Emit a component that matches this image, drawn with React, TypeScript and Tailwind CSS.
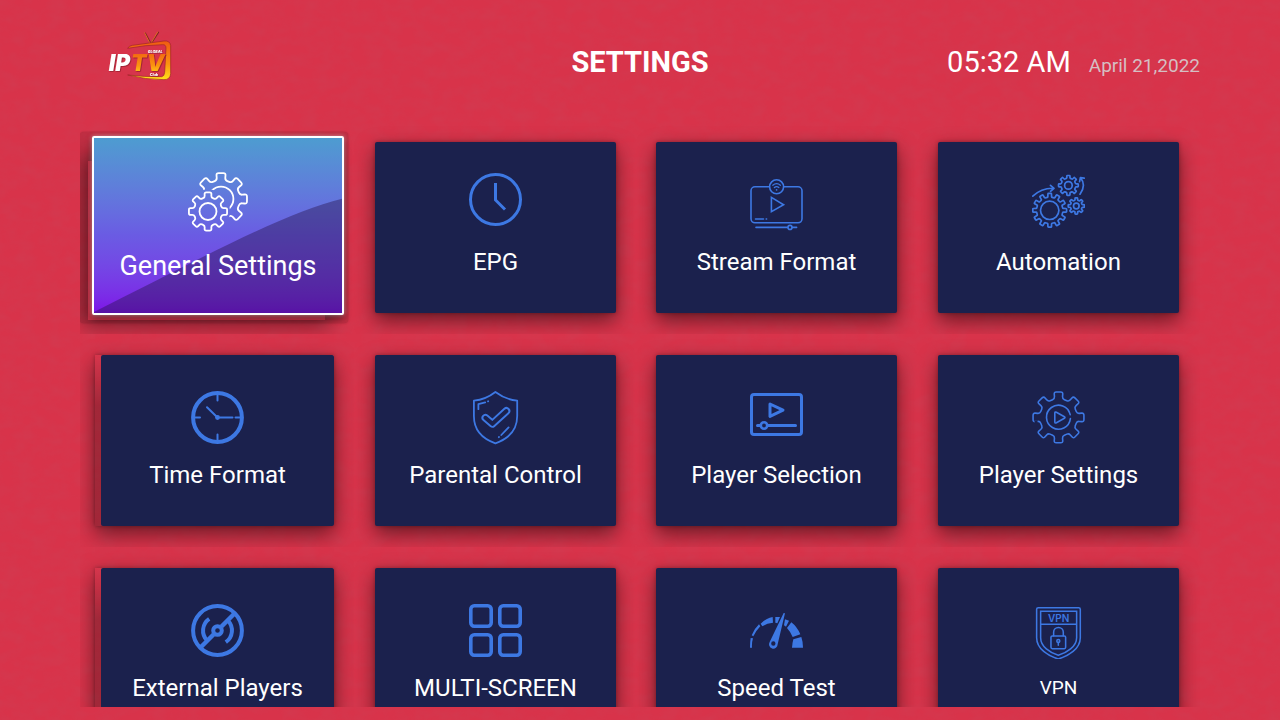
import type { ReactNode } from 'react';

const BLUE = '#3d78e3';
const NAVY = '#1b214d';

/** Outline of a gear with n teeth, the first one pointing up, every corner rounded by `soft`. */
function gear(
  cx: number,
  cy: number,
  outer: number,
  root: number,
  n: number,
  top = 0.2,
  base = 0.27,
  soft = 0.6,
): string {
  const step = (Math.PI * 2) / n;
  const points: [number, number][] = [];
  for (let i = 0; i < n; i++) {
    const a = i * step;
    const corners: [number, number][] = [
      [root, a - base * step],
      [outer, a - top * step],
      [outer, a + top * step],
      [root, a + base * step],
    ];
    for (const [r, t] of corners) points.push([cx + r * Math.sin(t), cy - r * Math.cos(t)]);
  }
  const toward = (p: [number, number], q: [number, number]) => {
    const length = Math.hypot(q[0] - p[0], q[1] - p[1]);
    const k = Math.min(soft, length / 2) / length;
    return `${(p[0] + (q[0] - p[0]) * k).toFixed(2)} ${(p[1] + (q[1] - p[1]) * k).toFixed(2)}`;
  };
  return (
    points
      .map((p, i) => {
        const previous = points[(i + points.length - 1) % points.length];
        const next = points[(i + 1) % points.length];
        return `${i ? 'L' : 'M'}${toward(p, previous)}Q${p[0].toFixed(2)} ${p[1].toFixed(2)} ${toward(p, next)}`;
      })
      .join('') + 'Z'
  );
}

function Icon({ children, width = 2 }: { children: ReactNode; width?: number }) {
  return (
    <svg
      aria-hidden="true"
      viewBox="0 0 53 60"
      className="h-[60px] w-[53px] shrink-0"
      fill="none"
      stroke={BLUE}
      strokeWidth={width}
      strokeLinejoin="round"
      strokeLinecap="round"
    >
      {children}
    </svg>
  );
}

const GeneralIcon = () => (
  <svg
    aria-hidden="true"
    viewBox="0 0 60 60"
    className="h-[60px] w-[60px] shrink-0"
    fill="none"
    stroke="#fff"
    strokeWidth={1.8}
    strokeLinejoin="round"
    strokeLinecap="round"
  >
    <mask id="behind-gear" maskUnits="userSpaceOnUse" x="0" y="0" width="60" height="60">
      <rect width="60" height="60" fill="#fff" stroke="none" />
      <circle cx="20" cy="39.3" r="22" fill="#000" stroke="none" />
      <rect x="30" y="46" width="10" height="14" fill="#000" stroke="none" />
    </mask>
    <g mask="url(#behind-gear)">
      <path d={gear(33, 27, 26.4, 19.3, 8, 0.23, 0.27, 2.4)} />
      <circle cx="33" cy="27" r="12.4" />
    </g>
    <path d={gear(20, 39.5, 19.4, 14.4, 8, 0.23, 0.29, 1.8)} />
    <circle cx="20" cy="39.5" r="8.5" />
  </svg>
);

const EpgIcon = () => (
  <Icon width={3}>
    <circle cx="26.5" cy="26.5" r="25" />
    <path d="M26.5 10V27L36 36.5" strokeLinecap="butt" strokeLinejoin="miter" />
  </Icon>
);

const StreamIcon = () => (
  <Icon width={1.6}>
    <rect x="1" y="13.8" width="51" height="36" rx="4" />
    <circle cx="26.6" cy="13.8" r="7" fill={NAVY} />
    <path d="M22.8 12.2Q26.6 9 30.4 12.2M24.4 14.6Q26.6 12.6 28.8 14.6" strokeWidth={1.3} />
    <circle cx="26.6" cy="16.8" r="0.9" fill={BLUE} stroke="none" />
    <path d="M21.4 24.4L33.6 31.7L21.4 38.7Z" strokeLinejoin="miter" />
    <path d="M5.5 46H13.5M16.2 46H16.6M6 54.4H37.6M42.4 54.4H46.6" />
    <circle cx="40" cy="54.4" r="2" />
  </Icon>
);

const AutomationIcon = () => (
  <Icon width={1.7}>
    <path d={gear(17.7, 37.3, 17, 13.2, 12)} />
    <circle cx="17.7" cy="37.3" r="9.2" />
    <path d={gear(36.4, 12.4, 10, 7.4, 8)} />
    <circle cx="36.4" cy="12.4" r="3.8" />
    <path d={gear(44.3, 33, 8.2, 6, 8)} />
    <circle cx="44.3" cy="33" r="2.8" />
    <path d="M0.8 23.2Q9.5 14.8 22 15.3M18.5 12.4L22 15.3L18.5 18.3" />
    <path d="M48 21.2Q54.5 12.5 48.6 4.8M47.6 8.6L48.4 4.6L52.2 5.2" />
  </Icon>
);

const TimeIcon = () => (
  <Icon width={2}>
    <circle cx="26.5" cy="31.5" r="24.4" strokeWidth={4} />
    <path d="M26.5 9V14.5M26.5 48.5V54M4 31.5H9M44.5 31.5H50M26.5 31.5H41.5M26.5 31.5L16 21.2" />
    <circle cx="26.5" cy="31.5" r="2.4" fill={BLUE} stroke="none" />
  </Icon>
);

const ParentalIcon = () => (
  <Icon width={1.8}>
    <path d="M26.4 6C20 11 12 14 4.9 14.7V30C4.9 45 14 53 26.4 57.3C38.8 53 48.2 45 48.2 30V14.7C41 14 33 11 26.4 6Z" />
    <path d="M16.4 31.8L23.4 37.8L37.4 25" strokeWidth={7.8} />
    <path d="M16.4 31.8L23.4 37.8L37.4 25" stroke={NAVY} strokeWidth={4} />
    <path d="M9.4 23.2V18.2L16.2 16.4M19 15.4L19.2 15.3M32.3 49L39.6 41.4M29.8 51.2L30 51" />
  </Icon>
);

const SelectionIcon = () => (
  <Icon width={3}>
    <rect x="1.5" y="8.5" width="50" height="40" rx="2.5" />
    <path d="M20 18L33 24.2L20 30.4Z" />
    <path d="M7.5 39.5H10M18 39.5H45.5" />
    <circle cx="14" cy="39.5" r="3.2" strokeWidth={2.6} />
  </Icon>
);

const PlayerSettingsIcon = () => (
  <Icon width={1.6}>
    <path d={gear(26.5, 31.4, 25.8, 19, 8, 0.22, 0.26, 2.2)} />
    <path d="M2.6 36.4L5.6 36.2" stroke={NAVY} strokeWidth={3.4} strokeLinecap="butt" />
    <path d="M38.2 28.6A12 12 0 1 0 38.4 32.6M36 23.8L37.2 26" />
    <path d="M22.8 27V36Q22.8 37.6 24.4 36.8L32.4 32.3Q33.6 31.5 32.4 30.7L24.4 26.2Q22.8 25.4 22.8 27Z" />
  </Icon>
);

const ExternalIcon = () => (
  <Icon width={4}>
    <g strokeLinecap="butt">
      <circle cx="26.5" cy="31.5" r="24.4" />
      <path d="M9.5 48.5L22.5 35.5M30.5 27.5L43.5 14.5" strokeWidth={4.4} />
      <circle cx="26.5" cy="31.5" r="4.3" />
      <path d="M18.2 19.8A14.3 14.3 0 0 0 16 41.4M34.8 43.2A14.3 14.3 0 0 0 37 21.6" />
    </g>
  </Icon>
);

const MultiIcon = () => (
  <Icon width={3.6}>
    <rect x="1.8" y="6.8" width="20.4" height="20.4" rx="3.4" />
    <rect x="30.8" y="6.8" width="20.4" height="20.4" rx="3.4" />
    <rect x="1.8" y="35.8" width="20.4" height="20.4" rx="3.4" />
    <rect x="30.8" y="35.8" width="20.4" height="20.4" rx="3.4" />
  </Icon>
);

const SpeedIcon = () => (
  <Icon>
    <g transform="translate(-20 -4) scale(0.3333)" fill={BLUE} stroke="none" fillRule="evenodd">
      <path d="M62 129L69 130Q65 143 66 158H60Q60 142 62 129Z" />
      <path d="M65 121Q73 101 87 88L91 94Q79 106 70 124Z" />
      <path d="M92 86Q107 70 128 66L129 83Q112 84 97 94Z" />
      <path d="M136 66L150 66L142 85L136 83Z" />
      <path d="M165 73L177 77L168 95L162 91Z" />
      <path d="M184 82Q201 95 211 118L188 126Q182 111 171 99Z" />
      <path d="M190 133L214 126Q219 140 219 158H186Q187 144 190 133Z" />
      <path d="M161 54L165 55L143 148A13 13 0 1 1 119 141ZM130 139A6.5 6.5 0 1 0 130 152A6.5 6.5 0 1 0 130 139Z" />
    </g>
  </Icon>
);

const VpnIcon = () => (
  <Icon>
    <g transform="translate(-302 -4) scale(0.3333)" strokeWidth={4.6}>
      <path d="M925 38H1046Q1051 38 1051 43V128C1051 162 1015 183 985 192C955 183 920 162 920 128V43Q920 38 925 38Z" />
      <path d="M932 49H1040V128C1040 155 1010 173 985 181C960 173 932 155 932 128ZM932 88H1040" strokeLinejoin="miter" />
      <rect x="963" y="123" width="44" height="38" rx="4" />
      <path d="M971 122V112A14.5 14.5 0 0 1 1000 112V122M985 142V151" />
      <circle cx="985" cy="138" r="4.5" />
      <text
        x="986"
        y="80"
        textAnchor="middle"
        className="font-['Inter',sans-serif] text-[30px] font-semibold"
        fill={BLUE}
        stroke="none"
      >
        VPN
      </text>
    </g>
  </Icon>
);

function Logo() {
  return (
    <svg role="img" aria-label="IPTV Global Club" viewBox="0 0 70 60" className="h-[60px] w-[70px]">
      <defs>
        <linearGradient id="flame" x1="0" y1="0" x2="0" y2="1">
          <stop offset="0" stopColor="#ef5a12" />
          <stop offset="0.6" stopColor="#fb9410" />
          <stop offset="1" stopColor="#ffe21a" />
        </linearGradient>
      </defs>
      <g transform="translate(-16 -6) scale(0.3333)">
        <path d="M166 43L182 73M205 40L183 74" fill="none" stroke="#7d1f28" strokeWidth="4.5" strokeLinecap="round" />
        <path d="M164 42L180 73M203 39L182 74" fill="none" stroke="#f0801f" strokeWidth="2.4" strokeLinecap="round" />
        <path d="M168 77Q181 66 194 73Z" fill="#b5472a" />
        <path
          d="M113 88Q117 80 127 79L222 66Q240 64 242 80V164Q241 182 222 182Q165 182 113 168Q165 174 215 173Q223 172 224 160L228 88Q228 76 218 77Q165 78 113 88Z"
          fill="url(#flame)"
          stroke="#9d1f2b"
          strokeWidth="2"
        />
        <g className="font-['Inter',sans-serif] font-black italic drop-shadow-[2px_2px_0_#8e1d2c]" stroke="none">
          <text x="56" y="157" className="text-[68px]" fill="#fff">IP</text>
          <text x="123" y="157" className="text-[68px]" fill="url(#flame)">TV</text>
          <text x="173" y="102" className="text-[11px]" fill="#fff">GLOBAL</text>
          <text x="179" y="170" className="text-[11px]" fill="#fff">Club</text>
        </g>
      </g>
    </svg>
  );
}

/** Faint paper grain over the red backdrop. */
function Grain() {
  return (
    <svg aria-hidden="true" className="pointer-events-none absolute inset-0 h-full w-full opacity-10">
      <filter id="grain" x="0" y="0" width="100%" height="100%">
        <feTurbulence type="fractalNoise" baseFrequency="0.06 0.09" numOctaves="5" seed="4" />
        <feColorMatrix values="0 0 0 0 0.4  0 0 0 0 0.15  0 0 0 0 0.2  1.6 0 0 0 -0.5" />
      </filter>
      <rect width="100%" height="100%" filter="url(#grain)" />
    </svg>
  );
}

function SelectedCard({ icon, label }: { icon: ReactNode; label: string }) {
  return (
    <div className="relative h-full">
      <span className="absolute -top-[10px] -bottom-[10px] -left-[12px] -right-[15px] rounded bg-black/10 shadow-[0_0_2px_rgba(0,0,0,0.25)]" />
      <span className="absolute top-[19px] -bottom-[7px] -left-[4px] right-[8px] shadow-[0_0_20px_6px_rgba(0,0,0,0.45)]" />
      <button
        type="button"
        aria-current="true"
        className="absolute -top-[6px] -bottom-[2px] left-0 -right-[11px] flex flex-col items-center overflow-hidden rounded-xs border-2 border-white bg-linear-to-b from-[#4d9cd0] via-[#6a5ce3] via-55% to-[#7e10e8] pt-[34px] shadow-[0_0_4px_rgba(255,255,255,0.5),0_3px_6px_rgba(0,0,0,0.5)]"
      >
        <svg aria-hidden="true" viewBox="0 0 249 176" preserveAspectRatio="none" className="absolute inset-0 h-full w-full">
          <path d="M0 175C90 130 190 75 249 61V176H0Z" fill="#26124a" fillOpacity="0.42" />
        </svg>
        <span className="relative flex flex-col items-center gap-5">
          {icon}
          <span className="text-[27px] leading-7">{label}</span>
        </span>
      </button>
    </div>
  );
}

type Item = { label: string; icon: ReactNode; first?: boolean; selected?: boolean; small?: boolean };

function Card({ label, icon, first, small }: Item) {
  const button = (
    <button
      type="button"
      className={`relative flex h-full w-full flex-col items-center gap-[15px] rounded-xs bg-[#1b214d] pt-[31px] pb-[37px] ${
        first ? '' : 'shadow-[0_8px_20px_rgba(0,0,0,0.5),0_0_4px_rgba(0,0,0,0.3)]'
      }`}
    >
      {icon}
      <span className={small ? 'text-[19px] leading-7' : 'text-2xl leading-7'}>{label}</span>
    </button>
  );
  if (!first) return button;
  return (
    <div className="ml-[3px] h-full bg-linear-to-b from-transparent to-black/25 to-30% pl-[6px] shadow-[0_8px_20px_rgba(0,0,0,0.5),0_0_4px_rgba(0,0,0,0.3)]">
      {button}
    </div>
  );
}

const items: Item[] = [
  { label: 'General Settings', icon: <GeneralIcon />, selected: true },
  { label: 'EPG', icon: <EpgIcon /> },
  { label: 'Stream Format', icon: <StreamIcon /> },
  { label: 'Automation', icon: <AutomationIcon /> },
  { label: 'Time Format', icon: <TimeIcon />, first: true },
  { label: 'Parental Control', icon: <ParentalIcon /> },
  { label: 'Player Selection', icon: <SelectionIcon /> },
  { label: 'Player Settings', icon: <PlayerSettingsIcon /> },
  { label: 'External Players', icon: <ExternalIcon />, first: true },
  { label: 'MULTI-SCREEN', icon: <MultiIcon /> },
  { label: 'Speed Test', icon: <SpeedIcon /> },
  { label: 'VPN', icon: <VpnIcon />, small: true },
];

export default function App() {
  return (
    <div className="relative flex h-screen flex-col overflow-hidden bg-[#d8334a] px-20 pb-[13px] font-['Roboto',sans-serif] text-white">
      <Grain />
      <header className="relative grid grid-cols-[1fr_auto_1fr] items-center pt-[25px] pb-9">
        <div className="pl-[26px]">
          <Logo />
        </div>
        <h1 className="pt-[14px] text-[29px] leading-9 font-bold">SETTINGS</h1>
        <div className="flex items-baseline justify-end gap-[18px] pt-[14px]">
          <time className="text-[29px] leading-9">05:32 AM</time>
          <span className="text-[19px] text-[#d5bfc3]">April 21,2022</span>
        </div>
      </header>
      <main className="relative min-h-0 flex-1 overflow-hidden">
        <div className="-ml-2 grid grid-cols-4">
          {items.map((item) => (
            <div key={item.label} className="overflow-hidden py-[21px] pr-5 pl-[21px] first:pl-5 first:pr-[21px] nth-[4n+3]:pr-[21px] nth-[4n+3]:pl-5 nth-[4n]:pr-[21px] nth-[4n]:pl-5 nth-[4n+1]:pl-5">
              {item.selected ? <SelectedCard icon={item.icon} label={item.label} /> : <Card {...item} />}
            </div>
          ))}
        </div>
      </main>
    </div>
  );
}
